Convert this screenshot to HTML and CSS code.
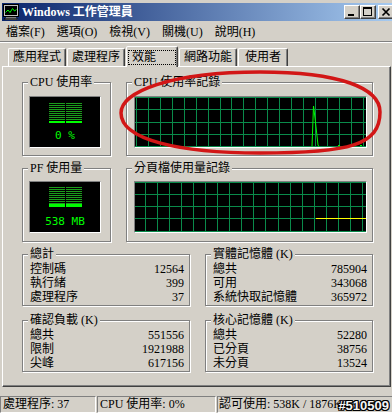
FILE: index.html
```html
<!DOCTYPE html>
<html lang="zh-Hant">
<head>
<meta charset="utf-8">
<title>Windows 工作管理員</title>
<link rel="stylesheet" href="styles.css">
</head>
<body>
<div class="titlebar">
  <svg class="app-icon" viewBox="0 0 16 16" width="16" height="16">
    <rect x="0.5" y="0.5" width="15" height="12" fill="#c0c0c0" stroke="#000"/>
    <rect x="2" y="2" width="12" height="9" fill="#000"/>
    <polyline points="2.5,8.5 5,6 7,8.5 9.5,4.5 11.5,7 13.5,5.5" fill="none" stroke="#00ff00"/>
    <rect x="3" y="13" width="10" height="3" fill="#808080"/>
    <rect x="1.5" y="14.5" width="13" height="1" fill="#c0c0c0" stroke="#000" stroke-width="0.6"/>
  </svg>
  <span class="title">Windows 工作管理員</span>
  <div class="caption">
    <span class="cbtn"><svg width="14" height="12" viewBox="0 0 14 12"><rect x="3" y="8" width="6" height="2" fill="#000"/></svg></span>
    <span class="cbtn"><svg width="14" height="12" viewBox="0 0 14 12"><path d="M2 1h9v9h-9z M3 3v6h7v-6z" fill="#000" fill-rule="evenodd"/></svg></span>
    <span class="cbtn cbtn-close"><svg width="14" height="12" viewBox="0 0 14 12"><path d="M3.5 2.5L10.5 9.5M10.5 2.5L3.5 9.5" stroke="#000" stroke-width="1.7" fill="none"/></svg></span>
  </div>
</div>

<nav class="menubar">
  <span class="menu-item">檔案(F)</span>
  <span class="menu-item">選項(O)</span>
  <span class="menu-item">檢視(V)</span>
  <span class="menu-item">關機(U)</span>
  <span class="menu-item">說明(H)</span>
</nav>
<div class="menu-sep"></div>

<div class="tabs">
  <span class="tab">應用程式</span>
  <span class="tab">處理程序</span>
  <span class="tab tab-active"><span class="focus">效能</span></span>
  <span class="tab">網路功能</span>
  <span class="tab tab-user">使用者</span>
</div>

<div class="panel">
  <div class="perf-top">
    <div class="group">
      <span class="group-title">CPU 使用率</span>
      <div class="body-meter">
        <div class="meter meter-cpu">
          <div class="meter-bars">
            <div class="meter-col"><div class="meter-dim"></div><div class="meter-lit"></div></div>
            <div class="meter-col"><div class="meter-dim"></div><div class="meter-lit"></div></div>
          </div>
          <div class="meter-label">0 %</div>
        </div>
      </div>
    </div>
    <div class="group">
      <span class="group-title">CPU 使用率記錄</span>
      <div class="body-graph">
        <div class="graph">
          <svg width="231" height="50" viewBox="0 0 231 50">
            <path class="grid" d="M1.5 0V50M13.5 0V50M25.5 0V50M37.5 0V50M49.5 0V50M61.5 0V50M73.5 0V50M85.5 0V50M96.5 0V50M108.5 0V50M120.5 0V50M132.5 0V50M144.5 0V50M156.5 0V50M168.5 0V50M180.5 0V50M192.5 0V50M204.5 0V50M216.5 0V50M228.5 0V50M0 0.5H231M0 12.5H231M0 25.5H231M0 37.5H231M0 49.5H231"/>
            <polyline class="cpu-line" points="177,49.5 178.5,9 180,21 183,48 184,49.5"/>
            <path class="cpu-line" d="M203 48.5h2M225 48.5h2"/>
          </svg>
        </div>
      </div>
    </div>
    <div class="group">
      <span class="group-title">PF 使用量</span>
      <div class="body-meter body-pf">
        <div class="meter meter-pf">
          <div class="meter-bars">
            <div class="meter-col"><div class="meter-dim"></div><div class="meter-lit"></div></div>
            <div class="meter-col"><div class="meter-dim"></div><div class="meter-lit"></div></div>
          </div>
          <div class="meter-label">538 MB</div>
        </div>
      </div>
    </div>
    <div class="group">
      <span class="group-title">分頁檔使用量記錄</span>
      <div class="body-graph body-pf">
        <div class="graph">
          <svg width="231" height="50" viewBox="0 0 231 50">
            <path class="grid" d="M10.5 0V50M22.5 0V50M34.5 0V50M46.5 0V50M58.5 0V50M70.5 0V50M82.5 0V50M94.5 0V50M106.5 0V50M118.5 0V50M130.5 0V50M143.5 0V50M155.5 0V50M167.5 0V50M179.5 0V50M191.5 0V50M203.5 0V50M215.5 0V50M227.5 0V50M0 0.5H231M0 12.5H231M0 24.5H231M0 36.5H231M0 49.5H231"/>
            <path class="pf-line" d="M181 36.5H231"/>
          </svg>
        </div>
      </div>
    </div>
  </div>

  <div class="perf-bottom">
    <div class="group">
      <span class="group-title">總計</span>
      <div class="stats">
        <div class="stat"><span>控制碼</span><span>12564</span></div>
        <div class="stat"><span>執行緒</span><span>399</span></div>
        <div class="stat"><span>處理程序</span><span>37</span></div>
      </div>
    </div>
    <div class="group">
      <span class="group-title">實體記憶體 (K)</span>
      <div class="stats">
        <div class="stat"><span>總共</span><span>785904</span></div>
        <div class="stat"><span>可用</span><span>343068</span></div>
        <div class="stat"><span>系統快取記憶體</span><span>365972</span></div>
      </div>
    </div>
    <div class="group">
      <span class="group-title">確認負載 (K)</span>
      <div class="stats">
        <div class="stat"><span>總共</span><span>551556</span></div>
        <div class="stat"><span>限制</span><span>1921988</span></div>
        <div class="stat"><span>尖峰</span><span>617156</span></div>
      </div>
    </div>
    <div class="group">
      <span class="group-title">核心記憶體 (K)</span>
      <div class="stats">
        <div class="stat"><span>總共</span><span>52280</span></div>
        <div class="stat"><span>已分頁</span><span>38756</span></div>
        <div class="stat"><span>未分頁</span><span>13524</span></div>
      </div>
    </div>
  </div>
</div>

<div class="statusbar">
  <span class="sb-cell sb-proc">處理程序: 37</span>
  <span class="sb-cell sb-cpu">CPU 使用率: 0%</span>
  <span class="sb-cell sb-commit">認可使用: 538K / 1876K</span>
  <span class="watermark">#510509</span>
</div>

<svg class="annotation" width="392" height="413" viewBox="0 0 392 413">
  <path d="M121 113 C121 92 170 72 260 72 C340 72 380 88 380 112 C380 145 350 153 260 153 C180 153 121 140 121 113 Z" fill="none" stroke="#d21616" stroke-width="3.5"/>
</svg>
</body>
</html>
```

FILE: styles.css
```css
* { box-sizing: border-box; }

html, body { margin: 0; padding: 0; }

body {
  position: relative;
  width: 392px;
  height: 413px;
  overflow: hidden;
  background: #d4d0c8;
  color: #000;
  font-family: "Liberation Serif", "Noto Sans CJK TC", serif;
  font-size: 12px;
  line-height: 14px;
}

/* title bar */
.titlebar {
  display: flex;
  align-items: center;
  height: 18px;
  margin: 3px 0 0 2px;
  background: linear-gradient(to right, #0a246a, #a6caf0);
  overflow: hidden;
}
.app-icon { flex: none; width: 16px; height: 16px; margin: 0 3px 0 1px; }
.title {
  flex: 1;
  color: #fff;
  font-weight: bold;
  white-space: nowrap;
}
.caption { display: flex; align-items: center; margin-right: -2px; }
.cbtn {
  display: block;
  width: 16px;
  height: 14px;
  background: #d4d0c8;
  border: 1px solid;
  border-color: #fff #404040 #404040 #fff;
  box-shadow: inset -1px -1px 0 #808080;
}
.cbtn svg { display: block; }
.cbtn-close { margin-left: 2px; }

/* menu */
.menubar { display: flex; height: 20px; padding-top: 2px; line-height: 18px; }
.menu-item { padding: 0 6px; white-space: nowrap; }
.menu-sep { height: 2px; border-top: 1px solid #808080; border-bottom: 1px solid #fff; }

/* tabs */
.tabs { display: flex; align-items: flex-end; height: 23px; padding-left: 8px; }
.tab {
  height: 18px;
  padding: 1px 4px 2px;
  margin-right: 1px;
  border: 1px solid;
  border-bottom: 0;
  border-color: #fff #404040 transparent #fff;
  border-radius: 2px 2px 0 0;
  box-shadow: inset -1px 0 0 #808080;
  white-space: nowrap;
}
.tab-user { padding-left: 6px; padding-right: 6px; }
.tab-active {
  position: relative;
  z-index: 1;
  height: 21px;
  padding: 3px 1px 2px;
  margin-bottom: -1px;
  background: #d4d0c8;
}
.focus {
  display: block;
  height: 15px;
  line-height: 13px;
  padding: 0 19px 0 3px;
  border: 1px dotted #000;
}

/* panel */
.panel {
  width: 389px;
  height: 321px;
  margin-left: 2px;
  padding: 15px 16px 0 19px;
  border: 1px solid;
  border-color: #fff #404040 #404040 #fff;
  box-shadow: inset -1px -1px 0 #808080;
}
.perf-top {
  display: grid;
  grid-template-columns: 89px 247px;
  column-gap: 15px;
  row-gap: 12px;
}
.perf-bottom {
  display: grid;
  grid-template-columns: 168px 168px;
  column-gap: 15px;
  row-gap: 14px;
  margin-top: 12px;
}

.group {
  display: flex;
  flex-direction: column;
  border: 1px solid #808080;
  box-shadow: 1px 1px 0 #fff, inset 1px 1px 0 #fff;
}
.group-title {
  align-self: flex-start;
  margin: -8px 0 0 5px;
  padding: 0 2px;
  background: #d4d0c8;
  white-space: nowrap;
}

.body-meter { padding: 7px 9px 7px 6px; }
.body-graph { padding: 7px 5px 7px 7px; }
.body-pf { padding-top: 6px; padding-bottom: 8px; }

.meter {
  display: flex;
  flex-direction: column;
  align-items: center;
  width: 72px;
  height: 52px;
  background: #000;
  border: 1px solid;
  border-color: #808080 #fff #fff #808080;
}
.meter-bars { display: flex; gap: 1px; margin-top: 6px; }
.meter-col { display: flex; flex-direction: column; width: 16px; }
.meter-dim {
  height: 18px;
  background: repeating-linear-gradient(to bottom, #1c9c1c 0 1px, #000 1px 2px);
}
.meter-lit { height: 2px; background: #00ff00; }
.meter-label {
  margin-top: 6px;
  color: #00ff00;
  font-family: "DejaVu Sans Mono", monospace;
  font-size: 11px;
  line-height: 14px;
  white-space: nowrap;
}
.meter-pf .meter-bars { margin-top: 5px; }
.meter-pf .meter-dim { height: 17px; }
.meter-pf .meter-lit { height: 3px; }
.meter-pf .meter-label { margin-top: 8px; }

.graph {
  width: 233px;
  height: 52px;
  background: #000;
  border: 1px solid;
  border-color: #808080 #fff #fff #808080;
}
.graph svg { display: block; }
.grid { stroke: #0a8a4a; stroke-width: 1; fill: none; }
.cpu-line { stroke: #00ff00; stroke-width: 1; fill: none; }
.pf-line { stroke: #ffff00; stroke-width: 1; fill: none; }

.stats { padding: 1px 5px 1px 7px; }
.stat { display: flex; justify-content: space-between; white-space: nowrap; }

/* status bar */
.statusbar {
  position: relative;
  display: flex;
  gap: 1px;
  height: 17px;
  margin-top: 9px;
}
.sb-cell {
  border: 1px solid;
  border-color: #808080 #fff #fff #808080;
  line-height: 15px;
  padding: 0 2px;
  white-space: nowrap;
  overflow: hidden;
}
.sb-proc { width: 96px; }
.sb-cpu { width: 119px; }
.sb-commit { flex: 1; padding-left: 1px; margin-right: -2px; }
.watermark {
  position: absolute;
  right: 3px;
  top: 1px;
  color: #f4f4f4;
  font-family: "Liberation Sans", sans-serif;
  font-weight: bold;
  font-size: 13px;
  line-height: 17px;
  text-shadow: 1px 0 #000, -1px 0 #000, 0 1px #000, 0 -1px #000, 1px 1px #000, -1px -1px #000, 1px -1px #000, -1px 1px #000;
}

.annotation {
  position: absolute;
  left: 0;
  top: 0;
  pointer-events: none;
}
```
